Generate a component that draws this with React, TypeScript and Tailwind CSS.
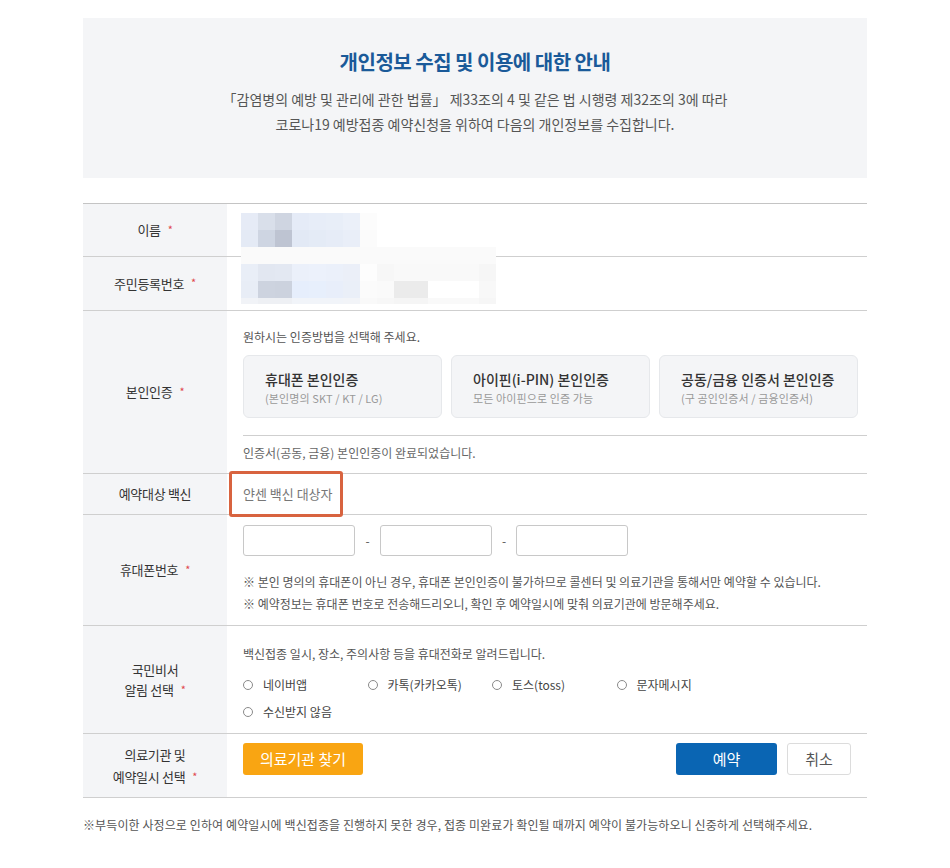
import React from "react";

// 개인정보 가리기용 모자이크 (15칸 x 6줄)
const mosaic: string[][] = [
  ["bg-[#e6ebf6]", "bg-[#d9dfea]", "bg-[#cfd5e1]", "bg-[#e5ebf7]", "bg-[#e7edf8]", "bg-[#e8eef8]", "bg-[#ebf0f9]", "bg-[#fcfcfc]", "", "", "", "", "", "", ""],
  ["bg-[#e4eaf5]", "bg-[#ced5e2]", "bg-[#bec4d2]", "bg-[#e2e9f5]", "bg-[#e4ebf6]", "bg-[#e6ecf7]", "bg-[#e9eef8]", "bg-[#fbfbfb]", "", "", "", "", "", "", ""],
  ["bg-[#fafafa]", "bg-[#fafafa]", "bg-[#fafafa]", "bg-[#fafafa]", "bg-[#fafafa]", "bg-[#fafafa]", "bg-[#fafafa]", "bg-[#fafafa]", "bg-[#fafafa]", "bg-[#fafafa]", "bg-[#fafafa]", "bg-[#fafafa]", "bg-[#fafafa]", "bg-[#fafafa]", "bg-[#fafafa]"],
  ["bg-[#e9eef7]", "bg-[#e2e7f1]", "bg-[#e3e8f2]", "bg-[#ebf0fa]", "bg-[#ecf1fb]", "bg-[#ebf0fa]", "bg-[#ebeff8]", "bg-[#fdfdfd]", "bg-[#f7f7f7]", "bg-[#f9f9f9]", "bg-[#f9f9f9]", "bg-[#f9f9f9]", "bg-[#f9f9f9]", "bg-[#f9f9f9]", "bg-[#f6f6f6]"],
  ["bg-[#e8edf6]", "bg-[#cdd3df]", "bg-[#ccd2de]", "bg-[#e6eefc]", "bg-[#e7effc]", "bg-[#e8eefa]", "bg-[#eaeff8]", "bg-[#fbfbfb]", "bg-[#fafafa]", "bg-[#ebebeb]", "bg-[#ebebeb]", "bg-white", "bg-white", "bg-white", "bg-[#f8f8f8]"],
  ["bg-[#f1f3f7]", "bg-[#eef0f4]", "bg-[#eef0f4]", "bg-[#f1f4f9]", "bg-[#f1f4f9]", "bg-[#f1f4f9]", "bg-[#f2f4f8]", "bg-[#f9f9f9]", "bg-[#f7f7f7]", "bg-[#f5f5f5]", "bg-[#f5f5f5]", "bg-[#f9f9f9]", "bg-[#f9f9f9]", "bg-[#f9f9f9]", "bg-[#f6f6f6]"],
];

const certCards = [
  { title: "휴대폰 본인인증", sub: "(본인명의 SKT / KT / LG)" },
  { title: "아이핀(i-PIN) 본인인증", sub: "모든 아이핀으로 인증 가능" },
  { title: "공동/금융 인증서 본인인증", sub: "(구 공인인증서 / 금융인증서)" },
];

const notifyOptions = ["네이버앱", "카톡(카카오톡)", "토스(toss)", "문자메시지", "수신받지 않음"];

function Required() {
  return <span className="ml-[7px] text-[11px] text-[#e0474c] relative -top-[1px]">*</span>;
}

function Label({ children }: { children: React.ReactNode }) {
  return (
    <div className="bg-[#f4f5f7] flex items-center justify-center text-center text-[13px] text-[#333] tracking-[-0.3px]">
      {children}
    </div>
  );
}

function Radio({ label }: { label: string }) {
  return (
    <label className="flex items-center h-[18px] text-[12px] text-[#444]">
      <span className="w-[10px] h-[10px] rounded-full border border-[#8a8a8a] bg-white mr-[10px]" />
      {label}
    </label>
  );
}

export default function App() {
  return (
    <div className="w-full min-h-screen bg-white font-['Noto_Sans_CJK_KR',sans-serif] pt-[18px] pb-[20px]">
      <div className="w-[784px] mx-auto">
        {/* 안내 박스 */}
        <div className="h-[160px] bg-[#f4f5f7] flex flex-col items-center pt-[30px]">
          <h1 className="text-[20px] leading-[28px] font-bold text-[#1a5a99] tracking-[-0.5px]">
            개인정보 수집 및 이용에 대한 안내
          </h1>
          <p className="mt-[11px] text-[14px] leading-[25px] text-[#555] text-center">
            「감염병의 예방 및 관리에 관한 법률」 제33조의 4 및 같은 법 시행령 제32조의 3에 따라
            <br />
            코로나19 예방접종 예약신청을 위하여 다음의 개인정보를 수집합니다.
          </p>
        </div>

        {/* 신청 양식 */}
        <div className="relative mt-[25px] border-t border-[#c4c4c4]">
          {/* 이름 */}
          <div className="grid grid-cols-[144px_1fr] h-[53px] border-b border-[#cfcfcf]">
            <Label>
              이름
              <Required />
            </Label>
            <div />
          </div>

          {/* 주민등록번호 */}
          <div className="grid grid-cols-[144px_1fr] h-[54px] border-b border-[#cfcfcf]">
            <Label>
              주민등록번호
              <Required />
            </Label>
            <div />
          </div>

          {/* 본인인증 */}
          <div className="grid grid-cols-[144px_1fr] border-b border-[#cfcfcf]">
            <Label>
              본인인증
              <Required />
            </Label>
            <div className="pl-4 pt-[17px] pb-[11px]">
              <p className="text-[12px] leading-[18px] text-[#555]">원하시는 인증방법을 선택해 주세요.</p>
              <div className="mt-[9px] mr-[9px] grid grid-cols-3 gap-[9px]">
                {certCards.map((card) => (
                  <div
                    key={card.title}
                    className="h-[63px] rounded-[6px] border border-[#e6e8eb] bg-[#f4f5f7] pl-[21px] pt-[13px]"
                  >
                    <div className="text-[14px] leading-[20px] font-medium text-[#333]">{card.title}</div>
                    <div className="mt-[2px] text-[11px] leading-[14px] text-[#999] tracking-[0.1px]">{card.sub}</div>
                  </div>
                ))}
              </div>
              <div className="mt-[17px] border-t border-[#cfcfcf]" />
              <p className="mt-[8px] text-[12px] leading-[18px] text-[#666]">
                인증서(공동, 금융) 본인인증이 완료되었습니다.
              </p>
            </div>
          </div>

          {/* 예약대상 백신 */}
          <div className="grid grid-cols-[144px_1fr] h-[41px] border-b border-[#cfcfcf]">
            <Label>예약대상 백신</Label>
            <div className="relative pl-4 flex items-center text-[13px] text-[#777]">
              얀센 백신 대상자
              <div className="absolute left-[2px] -top-[3px] w-[114px] h-[46px] border-[3px] border-[#d8633f] rounded-[3px]" />
            </div>
          </div>

          {/* 휴대폰번호 */}
          <div className="grid grid-cols-[144px_1fr] border-b border-[#cfcfcf]">
            <Label>
              휴대폰번호
              <Required />
            </Label>
            <div className="pl-4 pt-[10px] pb-[10px]">
              <div className="flex items-center">
                <input className="w-[112px] h-[31px] border border-[#c8c8c8] rounded-[3px] bg-white" />
                <span className="w-[25px] text-center text-[12px] text-[#555]">-</span>
                <input className="w-[112px] h-[31px] border border-[#c8c8c8] rounded-[3px] bg-white" />
                <span className="w-[24px] text-center text-[12px] text-[#555]">-</span>
                <input className="w-[112px] h-[31px] border border-[#c8c8c8] rounded-[3px] bg-white" />
              </div>
              <div className="mt-[15px] text-[12px] leading-[22px] text-[#555]">
                <p>※ 본인 명의의 휴대폰이 아닌 경우, 휴대폰 본인인증이 불가하므로 콜센터 및 의료기관을 통해서만 예약할 수 있습니다.</p>
                <p>※ 예약정보는 휴대폰 번호로 전송해드리오니, 확인 후 예약일시에 맞춰 의료기관에 방문해주세요.</p>
              </div>
            </div>
          </div>

          {/* 국민비서 알림 선택 */}
          <div className="grid grid-cols-[144px_1fr] border-b border-[#cfcfcf]">
            <Label>
              <span className="leading-[20px]">
                국민비서
                <br />
                알림 선택
                <Required />
              </span>
            </Label>
            <div className="pl-4 pt-[19px] pb-[12px]">
              <p className="text-[12px] leading-[18px] text-[#555]">
                백신접종 일시, 장소, 주의사항 등을 휴대전화로 알려드립니다.
              </p>
              <div className="mt-[13px] w-[498px] grid grid-cols-4 gap-y-[9px]">
                {notifyOptions.map((opt) => (
                  <Radio key={opt} label={opt} />
                ))}
              </div>
            </div>
          </div>

          {/* 의료기관 및 예약일시 선택 */}
          <div className="grid grid-cols-[144px_1fr] h-[64px] border-b border-[#cfcfcf]">
            <Label>
              <span className="leading-[22px]">
                의료기관 및
                <br />
                예약일시 선택
                <Required />
              </span>
            </Label>
            <div className="pl-4 pr-4 pt-[9px] flex items-start justify-between">
              <button className="w-[120px] h-[32px] rounded-[3px] bg-[#f9a512] text-white text-[15px]">
                의료기관 찾기
              </button>
              <div className="flex gap-[10px]">
                <button className="w-[101px] h-[32px] rounded-[3px] bg-[#0a65b3] text-white text-[15px]">예약</button>
                <button className="w-[64px] h-[32px] rounded-[3px] border border-[#dcdcdc] bg-white text-[#555] text-[15px]">
                  취소
                </button>
              </div>
            </div>
          </div>

          {/* 개인정보 모자이크 */}
          <div className="absolute left-[158px] top-[9px] grid grid-cols-[repeat(15,17px)] grid-rows-[17px_17px_17px_17px_17px_6px]">
            {mosaic.flatMap((row, r) =>
              row.map((cls, c) => <div key={`${r}-${c}`} className={cls} />)
            )}
          </div>
        </div>

        <p className="mt-[18px] text-[12px] leading-[18px] text-[#555] tracking-[0.1px]">
          ※부득이한 사정으로 인하여 예약일시에 백신접종을 진행하지 못한 경우, 접종 미완료가 확인될 때까지 예약이 불가능하오니 신중하게 선택해주세요.
        </p>
      </div>
    </div>
  );
}
